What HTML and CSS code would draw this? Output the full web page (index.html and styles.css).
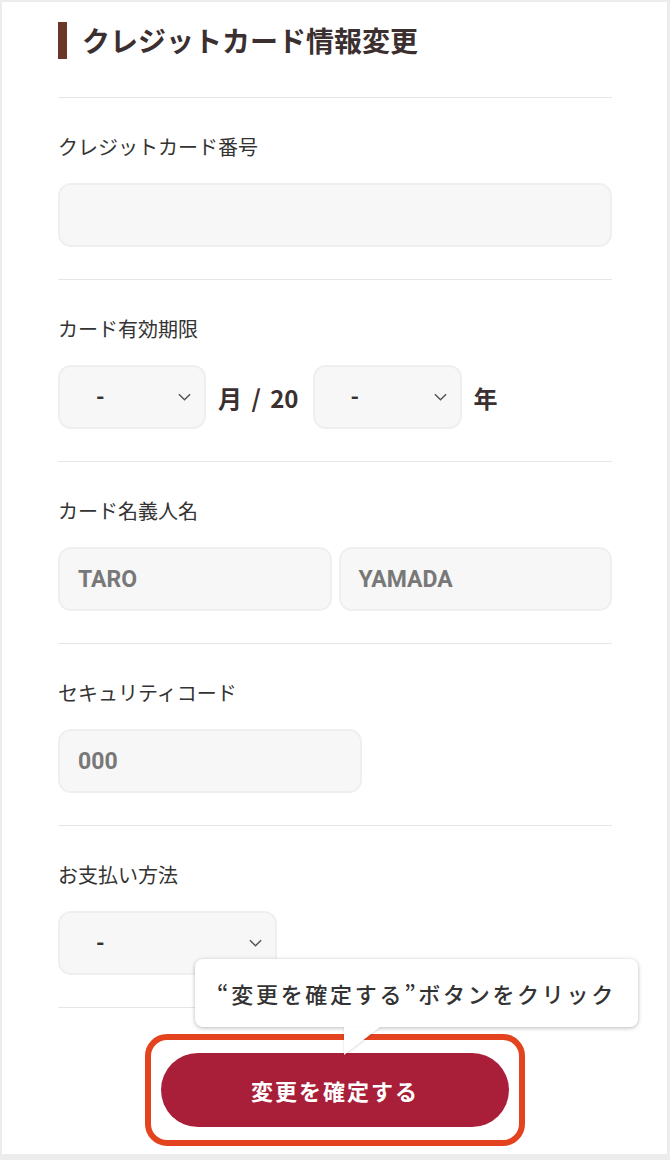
FILE: index.html
```html
<!DOCTYPE html>
<html lang="ja">
<head>
<meta charset="utf-8">
<link rel="stylesheet" href="styles.css">
</head>
<body>
<div class="card">
  <h1 class="title">クレジットカード情報変更</h1>
  <div class="section">
    <div class="label">クレジットカード番号</div>
    <div class="field field-full"></div>
  </div>
  <div class="section">
    <div class="label">カード有効期限</div>
    <div class="row">
      <div class="field select sel-month"><span class="val">-</span><svg class="chev" viewBox="0 0 14 8"><path d="M1 1l6 6 6-6"/></svg></div>
      <span class="unit">月 / 20</span>
      <div class="field select sel-year"><span class="val">-</span><svg class="chev" viewBox="0 0 14 8"><path d="M1 1l6 6 6-6"/></svg></div>
      <span class="unit">年</span>
    </div>
  </div>
  <div class="section">
    <div class="label">カード名義人名</div>
    <div class="row name-row">
      <div class="field text-field">TARO</div>
      <div class="field text-field">YAMADA</div>
    </div>
  </div>
  <div class="section">
    <div class="label">セキュリティコード</div>
    <div class="field text-field code">000</div>
  </div>
  <div class="section">
    <div class="label">お支払い方法</div>
    <div class="field select sel-pay"><span class="val">-</span><svg class="chev" viewBox="0 0 14 8"><path d="M1 1l6 6 6-6"/></svg></div>
  </div>
  <div class="submit-area">
    <div class="highlight">
      <div class="btn">変更を確定する</div>
    </div>
    <div class="tooltip">“変更を確定する”ボタンをクリック</div>
  </div>
</div>
</body>
</html>
```

FILE: styles.css
```css
html, body {
  margin: 0;
  padding: 0;
}
body {
  background: #ececec;
  width: 670px;
  height: 1160px;
  padding: 2px 3px 6px 2px;
  box-sizing: border-box;
  font-family: "Noto Sans CJK JP", sans-serif;
  color: #333;
}
.card {
  background: #fff;
  height: 1152px;
  padding: 0 55px 0 56px;
  box-sizing: border-box;
}
.title {
  margin: 0;
  padding: 20px 0 38px 0;
  display: flex;
  align-items: center;
  font-size: 28px;
  line-height: 37px;
  height: 37px;
  font-weight: 700;
  color: #3b2f30;
  border-bottom: 1px solid #e6e6e6;
}
.title::before {
  content: "";
  width: 9px;
  height: 37px;
  background: #6b3727;
  margin-right: 15px;
}
.section {
  padding: 35px 0 32px 0;
  border-bottom: 1px solid #e6e6e6;
}
.label {
  font-size: 20px;
  line-height: 28px;
  margin-bottom: 22px;
  color: #333;
}
.field {
  height: 64px;
  box-sizing: border-box;
  background: #f7f7f7;
  border: 2px solid #efefef;
  border-radius: 13px;
}
.field-full {
  width: 100%;
}
.row {
  display: flex;
  align-items: center;
}
.select {
  display: flex;
  align-items: center;
  justify-content: space-between;
  padding: 0 13px 0 36px;
}
.select .val {
  font-family: Roboto, "Noto Sans CJK JP", sans-serif;
  font-weight: 700;
  font-size: 22px;
  color: #333;
}
.chev {
  width: 13px;
  height: 8px;
  fill: none;
  stroke: #555;
  stroke-width: 1.6;
}
.sel-month { width: 148px; }
.sel-year { width: 149px; }
.sel-pay { width: 219px; }
.unit {
  font-size: 24px;
  font-weight: 700;
  color: #3b2f30;
  word-spacing: 4px;
  margin: 0 14px 0 12px;
}
.text-field {
  display: flex;
  align-items: center;
  padding-left: 18px;
  font-family: Roboto, "Noto Sans CJK JP", sans-serif;
  font-weight: 700;
  font-size: 23px;
  color: #787878;
}
.name-row {
  gap: 7px;
}
.name-row .text-field {
  flex: 1;
}
.code {
  width: 304px;
}
.submit-area {
  position: relative;
  display: flex;
  justify-content: center;
  padding-top: 26px;
}
.highlight {
  width: 380px;
  height: 112px;
  box-sizing: border-box;
  border: 6px solid #e4431f;
  border-radius: 22px;
  display: flex;
  align-items: center;
  justify-content: center;
}
.btn {
  width: 348px;
  height: 74px;
  border-radius: 37px;
  background: #a91e38;
  color: #fff;
  font-size: 22px;
  font-weight: 700;
  letter-spacing: 2px;
  display: flex;
  align-items: center;
  justify-content: center;
}
.tooltip {
  position: absolute;
  left: 137px;
  top: -49px;
  width: 443px;
  height: 68px;
  box-sizing: border-box;
  background: #fff;
  border-radius: 8px;
  box-shadow: 0 1px 4px rgba(0, 0, 0, 0.28);
  display: flex;
  align-items: center;
  justify-content: center;
  font-size: 22px;
  font-weight: 500;
  letter-spacing: 2.7px;
  color: #333;
}
.tooltip::after {
  content: "";
  position: absolute;
  left: 149px;
  top: 68px;
  width: 0;
  height: 0;
  border-top: 28px solid #fff;
  border-right: 36px solid transparent;
  filter: drop-shadow(0 1px 1px rgba(0, 0, 0, 0.15));
}
```
